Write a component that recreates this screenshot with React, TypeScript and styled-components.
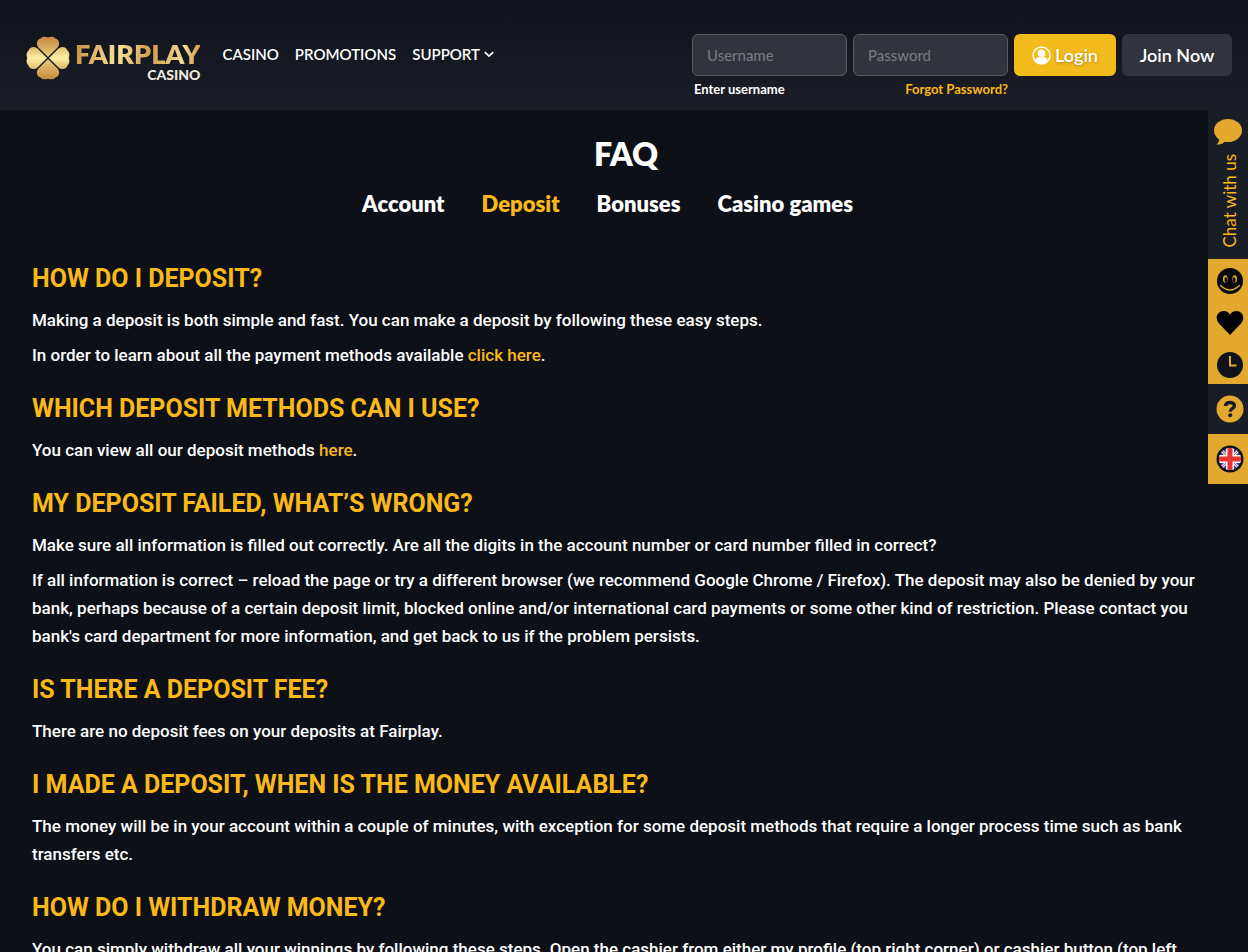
import React from "react";
import styled, { createGlobalStyle, css } from "styled-components";

const gold = "#fbb917";
const railGold = "#e3a92f";

const GlobalStyle = createGlobalStyle`
  *, *::before, *::after { box-sizing: border-box; }
  html { background: #0d1017; }
  body {
    margin: 0;
    color: #fff;
    background: #0d1017;
    font-family: Lato, "Liberation Sans", sans-serif;
    font-size: 18px;
    font-weight: 500;
    line-height: 28px;
  }
  a { color: inherit; text-decoration: none; }
  button, input { font: inherit; }
`;

const Header = styled.header`
  display: flex;
  align-items: flex-start;
  height: 110px;
  padding: 34px 16px 0 26px;
  background: linear-gradient(#0f121a, #1b1e27);
`;

const Logo = styled.a`
  display: flex;
  align-items: center;
  gap: 5px;
  height: 48px;
`;

const LogoWords = styled.span`
  display: flex;
  flex-direction: column;
  align-items: flex-end;
  padding-top: 5px;
`;

const LogoName = styled.span`
  font-size: 27px;
  font-weight: 800;
  line-height: 28px;
  color: transparent;
  background: linear-gradient(100deg, #c98f3f, #f6e39a 35%, #d29a4a 60%, #f3dc92 85%, #c98f3f);
  background-clip: text;
`;

const LogoSub = styled.span`
  font-size: 14px;
  font-weight: 900;
  line-height: 14px;
  color: #eee9df;
`;

const Nav = styled.nav`
  display: flex;
  gap: 16px;
  margin-left: 22px;
  padding-top: 6px;
  font-size: 15px;
  font-weight: 600;
`;

const NavLink = styled.a`
  display: flex;
  align-items: center;
  gap: 4px;
`;

const LoginForm = styled.form`
  display: flex;
  gap: 6px;
  margin-left: auto;
`;

const Field = styled.div`
  display: flex;
  flex-direction: column;
  width: 155px;
`;

const TextBox = styled.input`
  width: 100%;
  height: 42px;
  padding: 0 14px;
  color: #fff;
  background: #32343d;
  border: 1px solid #595b63;
  border-radius: 6px;
  font-size: 15px;
  font-weight: 400;
  &::placeholder { color: #7b7c80; opacity: 1; }
`;

const hint = css`
  padding-top: 4px;
  font-size: 13px;
  font-weight: 700;
  line-height: 18px;
`;

const FieldLabel = styled.label`
  ${hint}
  padding-left: 2px;
`;

const ForgotLink = styled.a`
  ${hint}
  color: ${gold};
  text-align: right;
`;

const Button = styled.button<{ $primary?: boolean }>`
  display: flex;
  align-items: center;
  justify-content: center;
  gap: 4px;
  width: ${(p) => (p.$primary ? "102px" : "110px")};
  height: 42px;
  padding: 0;
  color: #fff;
  font-weight: 600;
  background: ${(p) => (p.$primary ? "#f3bb1c" : "#32343d")};
  border: 0;
  border-radius: 6px;
  text-shadow: ${(p) => (p.$primary ? "0 1px 3px rgba(0, 0, 0, 0.3)" : "none")};
`;

const Main = styled.main`
  padding: 22px 28px 40px 32px;
`;

const PageTitle = styled.h1`
  margin: 0;
  font-size: 32px;
  font-weight: 800;
  line-height: 44px;
  text-align: center;
`;

const Tabs = styled.nav`
  display: flex;
  justify-content: center;
  margin: 14px 0 44px;
  font-size: 22px;
  font-weight: 800;
`;

const Tab = styled.a<{ $active?: boolean }>`
  margin-right: 37px;
  color: ${(p) => (p.$active ? gold : "#fff")};
`;

const Question = styled.h2`
  margin: 0 0 10px;
  color: ${gold};
  font-family: Roboto, Lato, sans-serif;
  font-size: 25px;
  font-weight: 700;
  line-height: 34px;
  text-transform: uppercase;
`;

const Entry = styled.section`
  margin-bottom: 23px;
`;

const Answer = styled.p`
  margin: 0 0 7px;
  font-family: Roboto, Lato, sans-serif;
  font-size: 17px;
`;

const GoldLink = styled.a`
  && { color: ${gold}; }
`;

const Rail = styled.aside`
  position: fixed;
  top: 110px;
  right: 0;
  width: 40px;
  line-height: 0;
`;

const RailBlock = styled.div<{ $gold?: boolean; $single?: boolean }>`
  display: flex;
  flex-direction: column;
  align-items: center;
  padding: ${(p) => (p.$single ? "11px 0 11px 4px" : p.$gold ? "8px 0 5px 4px" : "8px 0 6px 4px")};
  gap: 14px;
  background: ${(p) => (p.$gold ? railGold : "#191d26")};
`;

const RailButton = styled.button`
  display: flex;
  flex-direction: column;
  align-items: center;
  gap: 8px;
  padding: 0;
  color: ${gold};
  background: none;
  border: 0;
  font-size: 17px;
  font-weight: 400;
  line-height: 20px;
`;

const ChatButton = styled(RailButton)`
  height: 135px;
`;

const ChatLabel = styled.span`
  writing-mode: vertical-rl;
  transform: rotate(180deg);
`;

const Clover = () => (
  <svg width="44" height="44" viewBox="0 0 44 44" aria-hidden="true">
    <defs>
      <linearGradient id="leafA" x1="0" y1="0" x2="0" y2="1">
        <stop offset="0" stopColor="#c58a42" />
        <stop offset="1" stopColor="#eccb7c" />
      </linearGradient>
      <linearGradient id="leafB" x1="0" y1="0" x2="1" y2="0">
        <stop offset="0" stopColor="#e3bd6b" />
        <stop offset="0.5" stopColor="#fbf0a5" />
        <stop offset="1" stopColor="#dcb262" />
      </linearGradient>
    </defs>
    {[0, 90, 180, 270].map((turn) => (
      <path
        key={turn}
        transform={`rotate(${turn} 22 22)`}
        fill={turn % 180 ? "url(#leafB)" : "url(#leafA)"}
        d="M22 21 12.500 11.500C9.500 8 11 3.500 14.500 2.500C16 .5 20 0 22 1.500C24 0 28 .5 29.500 2.500C33 3.500 34.500 8 31.500 11.500Z"
      />
    ))}
  </svg>
);

const Chevron = () => (
  <svg width="10" height="7" viewBox="0 0 10 7" fill="none" stroke="#fff" strokeWidth="1.7" aria-hidden="true">
    <path d="M.8 1.200 5 5.200 9.200 1.200" />
  </svg>
);

const UserIcon = () => (
  <svg width="19" height="19" viewBox="0 0 19 19" aria-hidden="true">
    <circle cx="9.500" cy="9.500" r="8.500" fill="none" stroke="#fff" strokeWidth="1.500" />
    <circle cx="9.500" cy="7.300" r="3.800" fill="#fff" />
    <path fill="#fff" d="M3.200 14.200C4 12.200 6 11.200 7 10.800Q9.500 12.300 12 10.800C13 11.200 15 12.200 15.800 14.200A8 8 0 0 1 3.200 14.200Z" />
  </svg>
);

const BubbleIcon = () => (
  <svg width="30" height="28" viewBox="2 0 30 28" fill={railGold} overflow="visible" aria-hidden="true">
    <ellipse cx="15" cy="12.500" rx="14" ry="11.500" />
    <path d="M6 19Q7 24 3.500 26.500Q10 27 13 22Z" />
  </svg>
);

const SmileIcon = () => (
  <svg width="28" height="28" viewBox="0 0 28 28" aria-hidden="true">
    <circle cx="14" cy="14" r="13" fill="#08090c" />
    <path fill="none" stroke={railGold} strokeWidth="1.300" strokeLinecap="round" d="M4.500 18.500Q14 27.500 23.500 18.500" />
    <g fill={railGold}>
      <ellipse cx="9.300" cy="12" rx="2.300" ry="3.700" />
      <ellipse cx="18.700" cy="12" rx="2.300" ry="3.700" />
    </g>
    <g fill="#08090c">
      <ellipse cx="9.800" cy="12.800" rx="1.300" ry="2.900" />
      <ellipse cx="18.200" cy="12.800" rx="1.300" ry="2.900" />
    </g>
  </svg>
);

const HeartIcon = () => (
  <svg width="28" height="28" viewBox="0 0 28 28" aria-hidden="true">
    <path fill="#000" d="M14 26 3 14.500C-2 8.500 2 2 7.500 2C10.500 2 13 3.500 14 6C15 3.500 17.500 2 20.500 2C26 2 30 8.500 25 14.500Z" />
  </svg>
);

const ClockIcon = () => (
  <svg width="28" height="28" viewBox="0 0 28 28" aria-hidden="true">
    <circle cx="14" cy="14" r="13" fill="#10131b" />
    <path fill="none" stroke={railGold} strokeWidth="2" d="M14 5V14.500H20.500" />
  </svg>
);

const HelpIcon = () => (
  <svg width="28" height="28" viewBox="0 0 28 28" aria-hidden="true">
    <circle cx="14" cy="14" r="13.500" fill={railGold} />
    <path fill="none" stroke="#191d26" strokeWidth="3.400" d="M9.500 11C9.800 8.300 12 7.500 14 7.500C16.500 7.500 18.500 8.800 18.500 10.800C18.500 13.500 14.200 13.300 14.200 16.800" />
    <circle cx="14.200" cy="20.300" r="2" fill="#191d26" />
  </svg>
);

const FlagIcon = () => (
  <svg width="28" height="28" viewBox="0 0 28 28" aria-hidden="true">
    <defs>
      <clipPath id="flagDisc"><circle cx="14" cy="14" r="11" /></clipPath>
    </defs>
    <circle cx="14" cy="14" r="13.500" fill="#10131b" />
    <g clipPath="url(#flagDisc)">
      <path fill="#33479b" d="M0 0H28V28H0Z" />
      <path stroke="#dfe3f2" strokeWidth="3" d="M3 3 25 25M25 3 3 25" />
      <path stroke="#e0565a" strokeWidth="1" d="M3 3 25 25M25 3 3 25" />
      <path stroke="#fff" strokeWidth="8" d="M14 0V28M0 14H28" />
      <path stroke="#e8322f" strokeWidth="5" d="M14 0V28M0 14H28" />
    </g>
  </svg>
);

const entries: { question: string; answers: React.ReactNode[] }[] = [
  {
    question: "How do I deposit?",
    answers: [
      "Making a deposit is both simple and fast. You can make a deposit by following these easy steps.",
      <>In order to learn about all the payment methods available <GoldLink href="#payments">click here</GoldLink>.</>,
    ],
  },
  {
    question: "Which deposit methods can I use?",
    answers: [<>You can view all our deposit methods <GoldLink href="#payments">here</GoldLink>.</>],
  },
  {
    question: "My deposit failed, what’s wrong?",
    answers: [
      "Make sure all information is filled out correctly. Are all the digits in the account number or card number filled in correct?",
      "If all information is correct – reload the page or try a different browser (we recommend Google Chrome / Firefox). The deposit may also be denied by your bank, perhaps because of a certain deposit limit, blocked online and/or international card payments or some other kind of restriction. Please contact you bank's card department for more information, and get back to us if the problem persists.",
    ],
  },
  {
    question: "Is there a deposit fee?",
    answers: ["There are no deposit fees on your deposits at Fairplay."],
  },
  {
    question: "I made a deposit, when is the money available?",
    answers: [
      "The money will be in your account within a couple of minutes, with exception for some deposit methods that require a longer process time such as bank transfers etc.",
    ],
  },
  {
    question: "How do I withdraw money?",
    answers: [
      "You can simply withdraw all your winnings by following these steps. Open the cashier from either my profile (top right corner) or cashier button (top left",
    ],
  },
];

export default function App() {
  return (
    <>
      <GlobalStyle />
      <Header>
        <Logo href="#home">
          <Clover />
          <LogoWords>
            <LogoName>FAIRPLAY</LogoName>
            <LogoSub>CASINO</LogoSub>
          </LogoWords>
        </Logo>
        <Nav>
          <NavLink href="#casino">CASINO</NavLink>
          <NavLink href="#promotions">PROMOTIONS</NavLink>
          <NavLink href="#support">SUPPORT <Chevron /></NavLink>
        </Nav>
        <LoginForm onSubmit={(e) => e.preventDefault()}>
          <Field>
            <TextBox id="username" placeholder="Username" />
            <FieldLabel htmlFor="username">Enter username</FieldLabel>
          </Field>
          <Field>
            <TextBox type="password" aria-label="Password" placeholder="Password" />
            <ForgotLink href="#forgot">Forgot Password?</ForgotLink>
          </Field>
          <Button $primary type="submit"><UserIcon />Login</Button>
          <Button type="button">Join Now</Button>
        </LoginForm>
      </Header>
      <Main>
        <PageTitle>FAQ</PageTitle>
        <Tabs>
          <Tab href="#account">Account</Tab>
          <Tab href="#deposit" $active>Deposit</Tab>
          <Tab href="#bonuses">Bonuses</Tab>
          <Tab href="#games">Casino games</Tab>
        </Tabs>
        {entries.map((entry) => (
          <Entry key={entry.question}>
            <Question>{entry.question}</Question>
            {entry.answers.map((answer, i) => <Answer key={i}>{answer}</Answer>)}
          </Entry>
        ))}
      </Main>
      <Rail>
        <RailBlock>
          <ChatButton><BubbleIcon /><ChatLabel>Chat with us</ChatLabel></ChatButton>
        </RailBlock>
        <RailBlock $gold>
          <RailButton aria-label="Games"><SmileIcon /></RailButton>
          <RailButton aria-label="Favourites"><HeartIcon /></RailButton>
          <RailButton aria-label="Recent"><ClockIcon /></RailButton>
        </RailBlock>
        <RailBlock $single>
          <RailButton aria-label="Help"><HelpIcon /></RailButton>
        </RailBlock>
        <RailBlock $gold $single>
          <RailButton aria-label="Language"><FlagIcon /></RailButton>
        </RailBlock>
      </Rail>
    </>
  );
}
